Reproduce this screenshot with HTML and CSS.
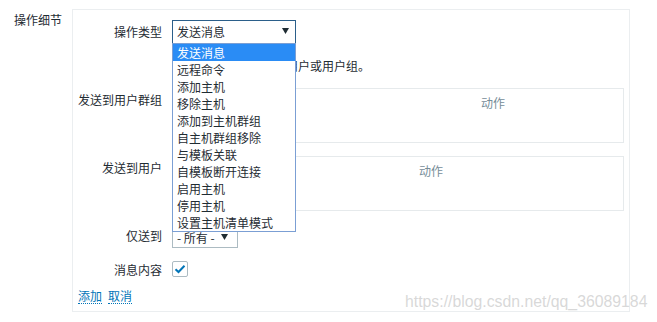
FILE: index.html
```html
<!DOCTYPE html>
<html lang="zh-CN">
<head>
<meta charset="utf-8">
<title>操作细节</title>
<link rel="stylesheet" href="styles.css">
</head>
<body>
<div class="page">
  <div class="section-label">操作细节</div>
  <div class="box">
    <div class="form">
      <div class="label label-mid">操作类型</div>
      <div class="field">
        <div class="select-wrap">
          <div class="select select-focus">
            <span>发送消息</span>
            <svg class="arrow" width="7" height="6" viewBox="0 0 7 6"><path d="M0 0H7L3.5 6Z" fill="#1f2c33"/></svg>
          </div>
          <ul class="dropdown">
            <li class="active">发送消息</li>
            <li>远程命令</li>
            <li>添加主机</li>
            <li>移除主机</li>
            <li>添加到主机群组</li>
            <li>自主机群组移除</li>
            <li>与模板关联</li>
            <li>自模板断开连接</li>
            <li>启用主机</li>
            <li>停用主机</li>
            <li>设置主机清单模式</li>
          </ul>
        </div>
      </div>

      <div class="label"></div>
      <div class="field notice">必须至少选择一个用户或用户组。</div>

      <div class="label label-top">发送到用户群组</div>
      <div class="field">
        <table class="assign">
          <tr><th class="col-group"></th><th>动作</th></tr>
          <tr><td colspan="2"></td></tr>
        </table>
      </div>

      <div class="label label-top">发送到用户</div>
      <div class="field">
        <table class="assign">
          <tr><th class="col-user"></th><th>动作</th></tr>
          <tr><td colspan="2"></td></tr>
        </table>
      </div>

      <div class="label label-mid">仅送到</div>
      <div class="field field-low">
        <div class="select select-small">
          <span>- 所有 -</span>
          <svg class="arrow" width="7" height="6" viewBox="0 0 7 6"><path d="M0 0H7L3.5 6Z" fill="#1f2c33"/></svg>
        </div>
      </div>

      <div class="label label-mid">消息内容</div>
      <div class="field">
        <span class="checkbox">
          <svg width="12" height="10" viewBox="0 0 12 10"><path d="M1.5 5.2L4.5 8L10.5 1.8" fill="none" stroke="#0275b8" stroke-width="2"/></svg>
        </span>
      </div>

      <div class="actions">
        <a class="link" href="#">添加</a>
        <a class="link" href="#">取消</a>
      </div>
    </div>
  </div>
</div>
<div class="watermark">https://blog.csdn.net/qq_36089184</div>
</body>
</html>
```

FILE: styles.css
```css
html, body {
  margin: 0;
  padding: 0;
  background: #ffffff;
}

body {
  font-family: "Noto Sans CJK SC", "Liberation Sans", sans-serif;
  font-size: 12px;
  color: #1f2c33;
  position: relative;
  width: 657px;
  height: 322px;
  overflow: hidden;
}

.page {
  display: flex;
  padding: 9px 0 0 14px;
}

.section-label {
  width: 58px;
  padding-top: 4px;
  line-height: 14px;
}

.box {
  box-sizing: border-box;
  width: 558px;
  height: 303px;
  border: 1px solid #ebeef0;
  padding: 10px 5px 0 5px;
}

.form {
  display: grid;
  grid-template-columns: 84px 1fr;
  column-gap: 10px;
  row-gap: 13px;
}

.label {
  text-align: right;
  line-height: 18px;
  white-space: nowrap;
}

.label-mid {
  align-self: center;
}

.label-top {
  padding-top: 3px;
}

.field {
  min-width: 0;
}

.field-low {
  padding-top: 4px;
}

.select-wrap {
  position: relative;
  width: 124px;
}

.select {
  box-sizing: border-box;
  height: 24px;
  border: 1px solid #acbbc2;
  display: flex;
  align-items: center;
  justify-content: space-between;
  padding: 0 6px 0 4px;
  line-height: 18px;
  background: #ffffff;
}

.select-focus {
  width: 124px;
  border-color: #2b5f8a;
}

.select-small {
  width: 66px;
  height: 20px;
  padding-right: 9px;
  line-height: 14px;
}

.arrow {
  display: block;
  margin-top: -2px;
}

.dropdown {
  position: absolute;
  left: 0;
  top: 23px;
  z-index: 5;
  box-sizing: border-box;
  width: 124px;
  margin: 0;
  padding: 0;
  list-style: none;
  border: 1px solid #7b9fd4;
  background: #ffffff;
}

.dropdown li {
  height: 17px;
  line-height: 17px;
  padding-left: 4px;
  white-space: nowrap;
}

.dropdown li.active {
  background: #2a8cf5;
  color: #ffffff;
}

.notice {
  line-height: 18px;
  padding-left: 18px;
}

.assign {
  width: 100%;
  height: 55px;
  border: 1px solid #e6eaec;
  border-collapse: collapse;
}

.assign th {
  font-weight: normal;
  color: #768d99;
  text-align: left;
  vertical-align: top;
  padding: 7px 5px 2px 5px;
  line-height: 14px;
}

.assign td {
  padding: 2px 5px 6px 5px;
  height: 18px;
}

.col-group {
  width: 293px;
}

.col-user {
  width: 231px;
}

.checkbox {
  box-sizing: border-box;
  width: 16px;
  height: 16px;
  border: 1px solid #acbbc2;
  border-radius: 2px;
  display: flex;
  align-items: center;
  justify-content: center;
}

.actions {
  grid-column: 1 / -1;
  display: flex;
  gap: 6px;
  margin-top: -4px;
  line-height: 18px;
}

.link {
  color: #0275b8;
  text-decoration: none;
  border-bottom: 1px dotted #0275b8;
  line-height: 15px;
}

.watermark {
  position: absolute;
  left: 405px;
  top: 293px;
  font-family: "Liberation Sans", sans-serif;
  font-size: 15.8px;
  color: rgba(190, 190, 190, 0.6);
  white-space: nowrap;
}
```
